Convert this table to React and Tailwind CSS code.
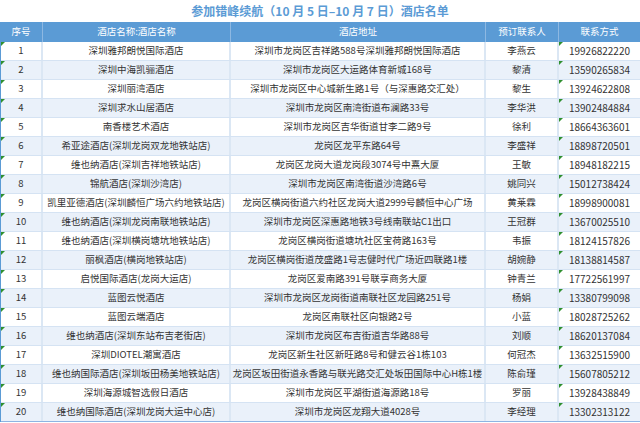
import React from "react";

const rows = [
  ["1", "深圳雅邦朗悦国际酒店", "深圳市龙岗区吉祥路588号深圳雅邦朗悦国际酒店", "李燕云", "19926822220"],
  ["2", "深圳中海凯骊酒店", "深圳市龙岗区大运路体育新城168号", "黎清", "13590265834"],
  ["3", "深圳丽湾酒店", "深圳市龙岗区中心城新生路1号（与深惠路交汇处）", "黎生", "13924622808"],
  ["4", "深圳求水山居酒店", "深圳市龙岗区南湾街道布澜路33号", "李华洪", "13902484884"],
  ["5", "南香楼艺术酒店", "深圳市龙岗区吉华街道甘李二路9号", "徐利", "18664363601"],
  ["6", "希亚途酒店(深圳龙岗双龙地铁站店)", "龙岗区龙平东路64号", "李盛祥", "18898720501"],
  ["7", "维也纳酒店(深圳吉祥地铁站店)", "龙岗区龙岗大道龙岗段3074号中熹大厦", "王敏", "18948182215"],
  ["8", "锦航酒店(深圳沙湾店)", "深圳市龙岗区南湾街道沙湾路6号", "姚同兴", "15012738424"],
  ["9", "凯里亚德酒店(深圳麟恒广场六约地铁站店)", "龙岗区横岗街道六约社区龙岗大道2999号麟恒中心广场", "黄莱霖", "18998900081"],
  ["10", "维也纳酒店(深圳龙岗南联地铁站店)", "深圳市龙岗区深惠路地铁3号线南联站C1出口", "王冠群", "13670025510"],
  ["11", "维也纳酒店(深圳横岗塘坑地铁站店)", "龙岗区横岗街道塘坑社区宝荷路163号", "韦振", "18124157826"],
  ["12", "丽枫酒店(横岗地铁站店)", "龙岗区横岗街道茂盛路1号志健时代广场近四联路1楼", "胡婉静", "18138814587"],
  ["13", "启悦国际酒店(龙岗大运店)", "龙岗区爱南路391号联享商务大厦", "钟青兰", "17722561997"],
  ["14", "蓝图云悦酒店", "深圳市龙岗区龙岗街道南联社区龙园路251号", "杨娟", "13380799098"],
  ["15", "蓝图云端酒店", "龙岗区南联社区向银路2号", "小蓝", "18028725262"],
  ["16", "维也纳酒店(深圳东站布吉老街店)", "深圳市龙岗区布吉街道吉华路88号", "刘顺", "18620137084"],
  ["17", "深圳DIOTEL潮寓酒店", "龙岗区新生社区新旺路8号和健云谷1栋103", "何冠杰", "13632515900"],
  ["18", "维也纳国际酒店(深圳坂田杨美地铁站店)", "龙岗区坂田街道永香路与联光路交汇处坂田国际中心H栋1楼", "陈俞瑾", "15607805212"],
  ["19", "深圳海源城智选假日酒店", "深圳市龙岗区平湖街道海源路18号", "罗丽", "13928438849"],
  ["20", "维也纳国际酒店(深圳龙岗大运中心店)", "深圳市龙岗区龙翔大道4028号", "李经理", "13302313122"],
];

function Tri() {
  return (
    <span className="absolute left-0 top-0 w-0 h-0 border-t-[4px] border-r-[4px] border-t-[#2f8f2f] border-r-transparent" />
  );
}

export default function App() {
  return (
    <div
      className="w-[640px] h-[423px] bg-white overflow-hidden text-[#333333]"
      style={{ fontFamily: '"Noto Sans CJK SC", "Noto Sans", sans-serif' }}
    >
      <div className="h-[22px] flex items-center justify-center text-[12px] font-bold text-[#5b9bd5] leading-none">
        参加错峰续航（10 月 5 日–10 月 7 日）酒店名单
      </div>
      <div className="grid grid-cols-[43px_188px_255px_73px_81px] h-[20px] bg-[#5b9bd5] text-white text-[9.5px] leading-none">
        <div className="flex items-center justify-center border-r border-[#8db8e2]">序号</div>
        <div className="flex items-center justify-center border-r border-[#8db8e2]">酒店名称:酒店名称</div>
        <div className="flex items-center justify-center border-r border-[#8db8e2]">酒店地址</div>
        <div className="flex items-center justify-center border-r border-[#8db8e2]">预订联系人</div>
        <div className="flex items-center justify-center">联系方式</div>
      </div>
      <div className="border-l border-[#5b9bd5]">
        {rows.map((r, i) => (
          <div
            key={r[0]}
            className={
              "grid grid-cols-[42px_188px_255px_73px_81px] h-[19px] text-[9.5px] leading-none border-b " +
              (i === rows.length - 1 ? "border-[#8db4e2] " : "border-[#d5e3f3] ") +
              (i % 2 === 1 ? "bg-[#eaf1fa]" : "bg-white")
            }
          >
            <div className="relative flex items-center justify-center border-r-2 border-[#dbe7f4]">
              <Tri />
              {r[0]}
            </div>
            <div className="flex items-center justify-center border-r-2 border-[#dbe7f4] whitespace-nowrap">{r[1]}</div>
            <div className="flex items-center justify-center border-r-2 border-[#dbe7f4] whitespace-nowrap">{r[2]}</div>
            <div className="flex items-center justify-center border-r-2 border-[#dbe7f4]">{r[3]}</div>
            <div className="relative flex items-center justify-center text-[10px]">
              <Tri />
              {r[4]}
            </div>
          </div>
        ))}
      </div>
    </div>
  );
}
